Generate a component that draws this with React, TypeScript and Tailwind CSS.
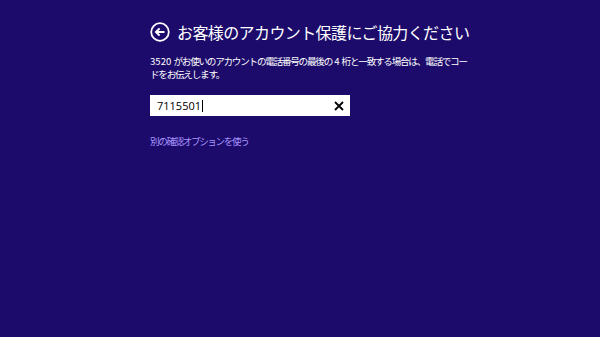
import React from 'react';

const FONT = { fontFamily: '"Noto Sans CJK JP", "Noto Sans", sans-serif' };

export default function App() {
  return (
    <div className="w-[600px] h-[337px] bg-[#1c0b6b] text-white overflow-hidden" style={FONT}>
      <div className="pl-[150px] pt-[22px] flex flex-col">
        {/* title */}
        <div className="flex items-center gap-[7px] h-[20px]">
          <svg width="20" height="20" viewBox="0 0 20 20" fill="none" stroke="white">
            <circle cx="10" cy="10" r="8.8" strokeWidth="1.8" />
            <path d="M14.5 10H6.2M9.6 6.4 6 10l3.6 3.6" strokeWidth="2" />
          </svg>
          <h1 className="text-[16px] leading-[20px] tracking-[-0.6px] whitespace-nowrap">
            お客様のアカウント保護にご協力ください
          </h1>
        </div>

        {/* description */}
        <p className="mt-[13px] text-[9.6px] leading-[12.5px] tracking-[-1.25px] whitespace-nowrap">
          <span className="tracking-normal">3520 </span>
          がお使いのアカウントの電話番号の最後の
          <span className="tracking-normal"> 4 </span>
          桁と一致する場合は、電話でコー
          <br />
          ドをお伝えします。
        </p>

        {/* input */}
        <div className="mt-[15px] w-[200px] h-[21px] bg-white flex items-center pl-[7px] pr-[6px]">
          <span className="text-[11px] text-black leading-none" style={{ fontFamily: '"Open Sans", "Noto Sans", sans-serif' }}>
            7115501
          </span>
          <span className="w-px h-[12px] bg-black ml-px" />
          <span className="flex-1" />
          <svg width="10" height="10" viewBox="0 0 10 10" stroke="black" strokeWidth="1.8">
            <path d="M1 1l8 8M9 1 1 9" />
          </svg>
        </div>

        {/* link */}
        <a className="mt-[19px] text-[9.6px] leading-[12px] tracking-[-1.4px] text-[#a994ff] whitespace-nowrap">
          別の確認オプションを使う
        </a>
      </div>
    </div>
  );
}
